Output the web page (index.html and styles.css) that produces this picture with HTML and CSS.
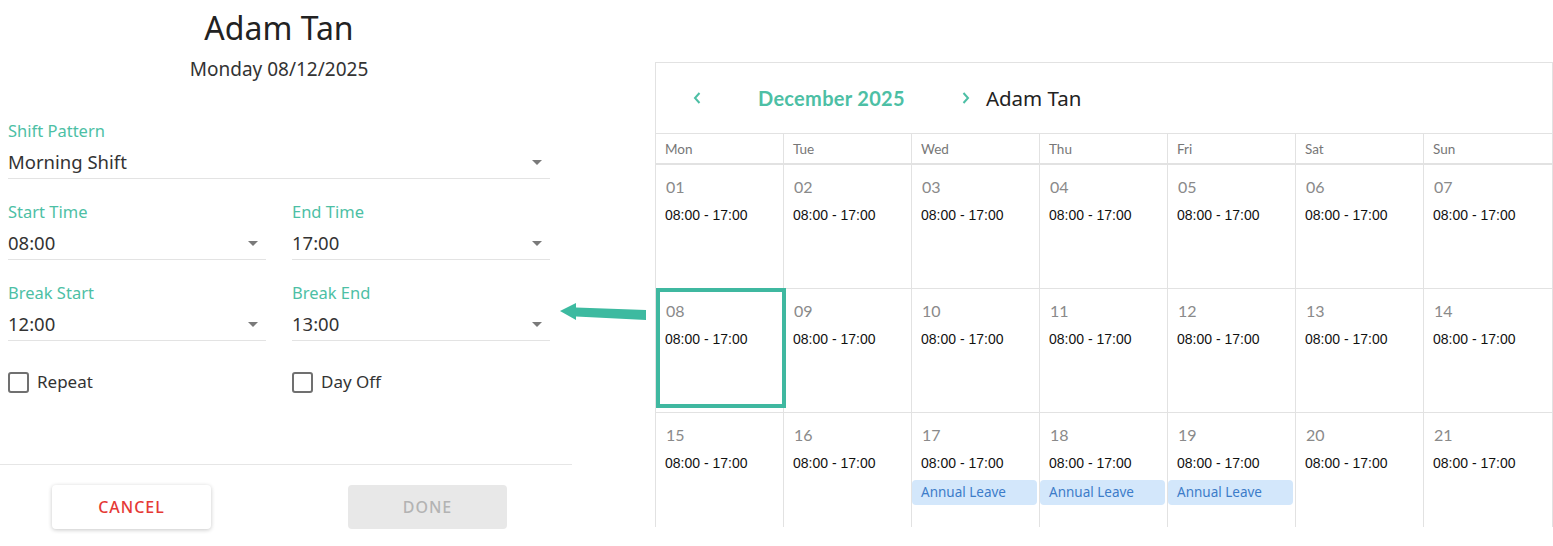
FILE: index.html
```html
<!DOCTYPE html>
<html lang="en">
<head>
<meta charset="utf-8">
<title>Shift editor</title>
<link rel="stylesheet" href="styles.css">
</head>
<body>
<div class="page">
  <section class="dialog">
    <div class="dialog-body">
      <h1 class="dialog-title">Adam Tan</h1>
      <div class="dialog-subtitle">Monday 08/12/2025</div>

      <div class="field">
        <label class="field-label">Shift Pattern</label>
        <div class="select"><span>Morning Shift</span><svg class="caret" viewBox="0 0 10 5" width="10" height="5"><path d="M0 0h10L5 5z"/></svg></div>
      </div>

      <div class="field-row">
        <div class="field">
          <label class="field-label">Start Time</label>
          <div class="select"><span>08:00</span><svg class="caret" viewBox="0 0 10 5" width="10" height="5"><path d="M0 0h10L5 5z"/></svg></div>
        </div>
        <div class="field">
          <label class="field-label">End Time</label>
          <div class="select"><span>17:00</span><svg class="caret" viewBox="0 0 10 5" width="10" height="5"><path d="M0 0h10L5 5z"/></svg></div>
        </div>
      </div>

      <div class="field-row">
        <div class="field">
          <label class="field-label">Break Start</label>
          <div class="select"><span>12:00</span><svg class="caret" viewBox="0 0 10 5" width="10" height="5"><path d="M0 0h10L5 5z"/></svg></div>
        </div>
        <div class="field">
          <label class="field-label">Break End</label>
          <div class="select"><span>13:00</span><svg class="caret" viewBox="0 0 10 5" width="10" height="5"><path d="M0 0h10L5 5z"/></svg></div>
        </div>
      </div>

      <div class="check-row">
        <label class="check"><span class="box"></span>Repeat</label>
        <label class="check"><span class="box"></span>Day Off</label>
      </div>
    </div>
    <div class="dialog-footer">
      <button class="btn btn-cancel">CANCEL</button>
      <button class="btn btn-done">DONE</button>
    </div>
  </section>

  <section class="calendar">
    <div class="cal-nav">
      <svg class="chev chev-prev" viewBox="0 0 8 12" width="8" height="12"><path d="M6.5 1L2 6l4.5 5" fill="none" stroke="currentColor" stroke-width="2"/></svg>
      <span class="cal-month">December 2025</span>
      <svg class="chev chev-next" viewBox="0 0 8 12" width="8" height="12"><path d="M1.5 1L6 6l-4.5 5" fill="none" stroke="currentColor" stroke-width="2"/></svg>
      <span class="cal-person">Adam Tan</span>
    </div>
    <div class="cal-weekdays">
      <div class="wd">Mon</div><div class="wd">Tue</div><div class="wd">Wed</div><div class="wd">Thu</div><div class="wd">Fri</div><div class="wd">Sat</div><div class="wd">Sun</div>
    </div>
    <div class="cal-grid">
      <div class="day"><div class="num">01</div><div class="time">08:00 - 17:00</div></div>
      <div class="day"><div class="num">02</div><div class="time">08:00 - 17:00</div></div>
      <div class="day"><div class="num">03</div><div class="time">08:00 - 17:00</div></div>
      <div class="day"><div class="num">04</div><div class="time">08:00 - 17:00</div></div>
      <div class="day"><div class="num">05</div><div class="time">08:00 - 17:00</div></div>
      <div class="day"><div class="num">06</div><div class="time">08:00 - 17:00</div></div>
      <div class="day"><div class="num">07</div><div class="time">08:00 - 17:00</div></div>

      <div class="day selected"><div class="num">08</div><div class="time">08:00 - 17:00</div></div>
      <div class="day"><div class="num">09</div><div class="time">08:00 - 17:00</div></div>
      <div class="day"><div class="num">10</div><div class="time">08:00 - 17:00</div></div>
      <div class="day"><div class="num">11</div><div class="time">08:00 - 17:00</div></div>
      <div class="day"><div class="num">12</div><div class="time">08:00 - 17:00</div></div>
      <div class="day"><div class="num">13</div><div class="time">08:00 - 17:00</div></div>
      <div class="day"><div class="num">14</div><div class="time">08:00 - 17:00</div></div>

      <div class="day"><div class="num">15</div><div class="time">08:00 - 17:00</div></div>
      <div class="day"><div class="num">16</div><div class="time">08:00 - 17:00</div></div>
      <div class="day"><div class="num">17</div><div class="time">08:00 - 17:00</div><div class="leave">Annual Leave</div></div>
      <div class="day"><div class="num">18</div><div class="time">08:00 - 17:00</div><div class="leave">Annual Leave</div></div>
      <div class="day"><div class="num">19</div><div class="time">08:00 - 17:00</div><div class="leave">Annual Leave</div></div>
      <div class="day"><div class="num">20</div><div class="time">08:00 - 17:00</div></div>
      <div class="day"><div class="num">21</div><div class="time">08:00 - 17:00</div></div>
    </div>
  </section>

  <svg class="pointer-arrow" viewBox="555 298 95 28" width="95" height="28"><polygon points="560,311 576,303 576,307.5 646,310 646,320 576,316.5 576,320"/></svg>
</div>
</body>
</html>
```

FILE: styles.css
```css
*, *::before, *::after { box-sizing: border-box; }

html, body {
  margin: 0;
  padding: 0;
  background: #ffffff;
}

body {
  font-family: "Noto Sans", "Open Sans", sans-serif;
  color: #333333;
}

.page {
  position: relative;
  display: flex;
  align-items: flex-start;
  width: 1553px;
  height: 546px;
  overflow: hidden;
}

/* ---------- Dialog ---------- */
.dialog {
  width: 572px;
  flex: none;
}

.dialog-body {
  padding: 8px 22px 70px 8px;
}

.dialog-title {
  margin: 0;
  font-size: 32px;
  line-height: 40px;
  font-weight: 400;
  color: #222222;
  text-align: center;
}

.dialog-subtitle {
  margin: 9px 0 0;
  font-size: 19px;
  line-height: 24px;
  color: #333333;
  text-align: center;
}

.dialog-subtitle + .field {
  margin-top: 40px;
}

.field {
  display: flex;
  flex-direction: column;
}

.field-label {
  font-size: 16.5px;
  line-height: 20px;
  color: #4dbfa5;
}

.select {
  margin-top: 9px;
  display: flex;
  align-items: center;
  justify-content: space-between;
  padding: 0 8px 4px 0;
  border-bottom: 1px solid #e3e3e3;
  font-size: 18.5px;
  line-height: 24px;
  color: #333333;
}

.caret {
  fill: #7a7a7a;
  flex: none;
}

.field-row {
  display: grid;
  grid-template-columns: 258px 258px;
  column-gap: 26px;
  margin-top: 23px;
}

.check-row {
  display: grid;
  grid-template-columns: 258px 258px;
  column-gap: 26px;
  margin-top: 29px;
}

.check {
  display: flex;
  align-items: center;
  gap: 8px;
  font-size: 17px;
  line-height: 24px;
  color: #333333;
}

.box {
  width: 21px;
  height: 21px;
  border: 2px solid #707070;
  border-radius: 3px;
  flex: none;
}

.dialog-footer {
  border-top: 1px solid #e6e6e6;
  display: flex;
  gap: 137px;
  padding: 20px 0 0 52px;
}

.btn {
  width: 159px;
  height: 44px;
  border: none;
  border-radius: 4px;
  font-family: "Noto Sans", "Open Sans", sans-serif;
  font-size: 16px;
  font-weight: 500;
  letter-spacing: 1px;
  padding: 0;
}

.btn-cancel {
  background: #ffffff;
  color: #e53935;
  box-shadow: 0 1px 4px rgba(0, 0, 0, 0.22);
}

.btn-done {
  background: #e8e8e8;
  color: #b3b3b3;
}

/* ---------- Calendar ---------- */
.calendar {
  margin-left: 83px;
  margin-top: 62px;
  width: 898px;
  height: 465px;
  border: 1px solid #e2e2e2;
  border-bottom: none;
  overflow: hidden;
  flex: none;
}

.cal-nav {
  height: 71px;
  display: flex;
  align-items: center;
  padding-left: 37px;
  border-bottom: 1px solid #e2e2e2;
}

.chev {
  color: #4dbfa5;
  flex: none;
}

.cal-month {
  margin-left: 57px;
  font-family: "Lato", "Noto Sans", sans-serif;
  font-weight: 700;
  font-size: 20px;
  letter-spacing: 0.3px;
  color: #4dbfa5;
}

.chev-next {
  margin-left: 57px;
}

.cal-person {
  margin-left: 16px;
  font-size: 20.5px;
  color: #222222;
}

.cal-weekdays {
  display: grid;
  grid-template-columns: repeat(7, 128px);
  height: 31px;
  border-bottom: 2px solid #e2e2e2;
}

.wd {
  font-family: "Lato", "Noto Sans", sans-serif;
  font-size: 13.5px;
  color: #777777;
  line-height: 30px;
  padding-left: 9px;
  border-right: 1px solid #e2e2e2;
}

.wd:last-child { border-right: none; }

.cal-grid {
  display: grid;
  grid-template-columns: repeat(7, 128px);
  grid-auto-rows: 124px;
}

.day {
  position: relative;
  padding-top: 12px;
  border-right: 1px solid #e2e2e2;
  border-bottom: 1px solid #e2e2e2;
}

.day:nth-child(7n) { border-right: none; }

.num {
  padding-left: 10px;
  font-family: "Lato", "Noto Sans", sans-serif;
  font-size: 16px;
  line-height: 20px;
  color: #8a8a8a;
}

.time {
  margin-top: 9px;
  padding-left: 9px;
  font-family: "Liberation Sans", Arial, sans-serif;
  font-size: 14px;
  line-height: 18px;
  color: #111111;
}

.leave {
  margin: 8px 2px 0 0;
  height: 25px;
  padding-left: 9px;
  border-radius: 4px;
  background: #d3e7fb;
  color: #3c7cc9;
  font-size: 13.5px;
  line-height: 25px;
}

.day.selected::after {
  content: "";
  position: absolute;
  left: 0;
  top: -1px;
  width: 130px;
  height: 120px;
  border: 4px solid #3fb8a0;
}

.pointer-arrow {
  position: absolute;
  left: 555px;
  top: 298px;
  fill: #3dbaa0;
}
```
